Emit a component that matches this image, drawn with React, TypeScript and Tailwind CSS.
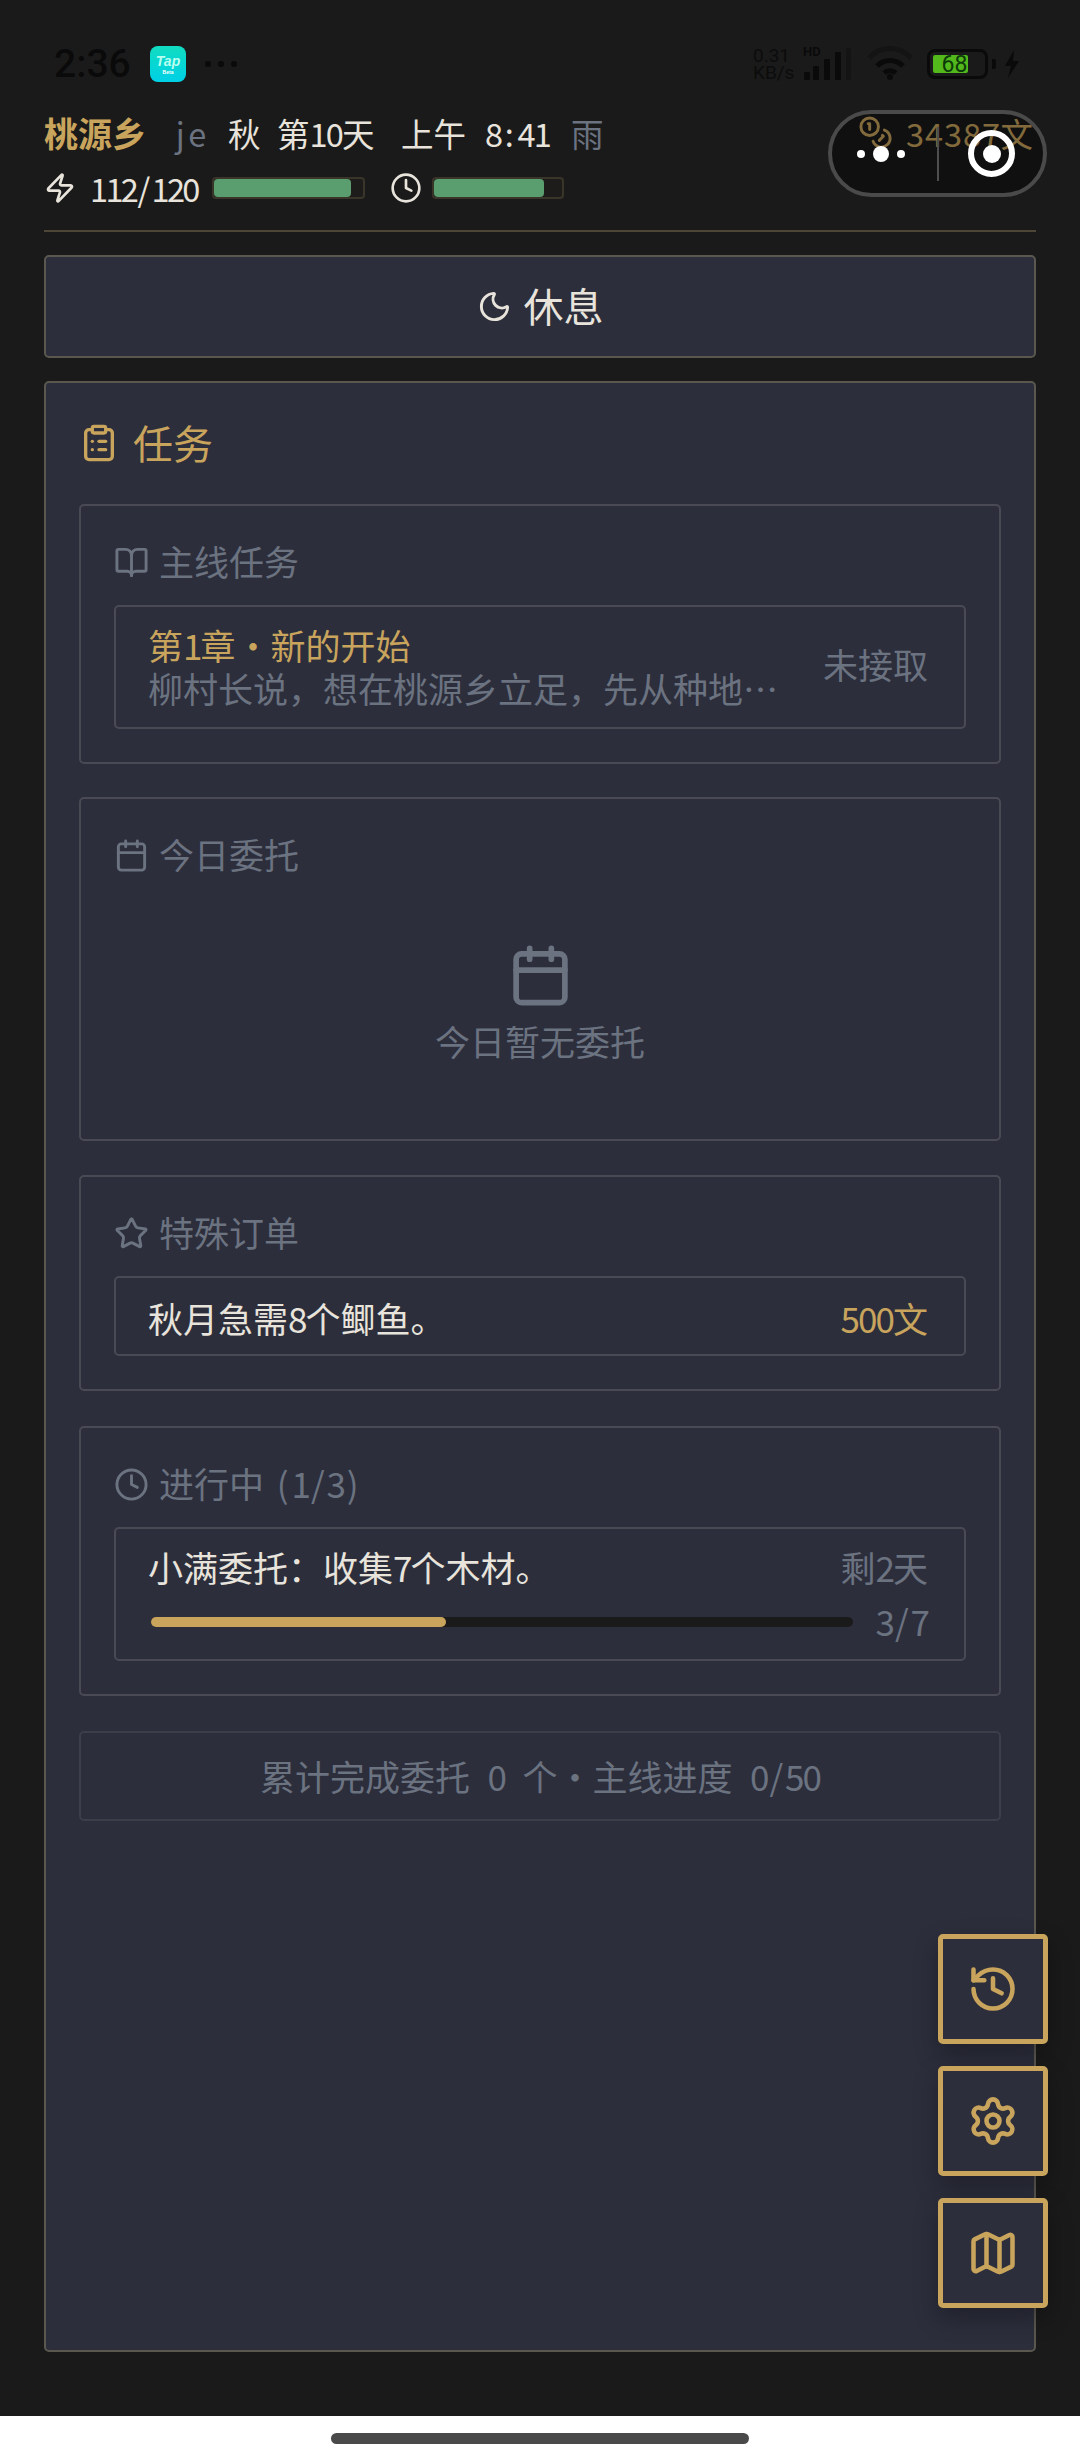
import React from "react";
import { BookOpen, Calendar, ClipboardList, Clock, Coins, History, Map as MapIcon, Moon, Settings, Star, Zap } from "lucide-react";

function N({ children, w = "w-[0.5em]" }: { children: string; w?: string }) {
  return (
    <>
      {[...children].map((c, i) => (
        <span key={i} className={`inline-block text-center ${w}`}>{c === " " ? "\u00A0" : c}</span>
      ))}
    </>
  );
}

function StatusBar() {
  return (
    <div className="flex h-[113px] shrink-0 items-start justify-between pl-[54px] pr-[60px] pt-[46px] text-[#0a0a0a]">
      <div className="flex items-center">
        <span className="w-[96px] font-['Roboto',sans-serif] text-[39px] font-medium leading-[36px]">2:36</span>
        <div className="flex h-[36px] w-[36px] flex-col items-center justify-center rounded-[8px] bg-gradient-to-b from-[#12dcc0] to-[#00d0e6] font-['Liberation_Sans',sans-serif] text-[#b8fff0]">
          <span className="text-[14px] font-bold italic leading-[16px]">Tap</span>
          <span className="text-[5px] font-bold leading-[6px] text-white">Beta</span>
        </div>
        <div className="ml-[19px] flex gap-[7px]">
          <span className="h-[6px] w-[6px] rounded-full bg-[#0a0a0a]" />
          <span className="h-[6px] w-[6px] rounded-full bg-[#0a0a0a]" />
          <span className="h-[6px] w-[6px] rounded-full bg-[#0a0a0a]" />
        </div>
      </div>
      <div className="flex items-center">
        <div className="flex w-[48px] flex-col font-['Roboto',sans-serif] text-[19px] leading-[17px] text-[#0c0c0c]">
          <span>0.31</span>
          <span>KB/s</span>
        </div>
        <svg width="52" height="36" viewBox="0 0 52 36" fill="#0a0a0a">
          <text x="2" y="10" fontSize="13" fontWeight="700" fontFamily="Roboto, sans-serif">HD</text>
          <rect x="3" y="26" width="6" height="8" rx="1" />
          <rect x="12" y="20" width="6" height="14" rx="1" />
          <rect x="23" y="13" width="6" height="21" rx="1" />
          <rect x="34" y="6" width="6" height="28" rx="1" />
          <rect x="45" y="2" width="5" height="32" rx="1" fill="#141414" />
        </svg>
        <svg className="ml-[14px]" width="46" height="36" viewBox="0 0 46 36" fill="none" stroke="#0a0a0a" strokeWidth="5">
          <path d="M2 12 A28 28 0 0 1 44 12" stroke="#141414" />
          <path d="M10 20 A18 18 0 0 1 36 20" />
          <path d="M17 27 A9 9 0 0 1 29 27" />
          <circle cx="23" cy="31" r="3" fill="#0a0a0a" stroke="none" />
        </svg>
        <div className="relative ml-[14px] h-[30px] w-[61px] rounded-[8px] border-[3px] border-[#0a0a0a] p-[3px]">
          <div className="h-full w-[35px] rounded-[2px] bg-[#52b81c]" />
          <span className="absolute inset-0 flex items-center justify-center pr-[6px] font-['Roboto',sans-serif] text-[23px] leading-none text-[#0c3a08]">68</span>
        </div>
        <span className="ml-[4px] h-[10px] w-[4px] rounded-r-[2px] bg-[#0a0a0a]" />
        <svg className="ml-[8px]" width="16" height="28" viewBox="0 0 16 28" fill="#0a0a0a">
          <path d="M10 0 L1 16 L7 16 L4 28 L15 11 L9 11 Z" />
        </svg>
      </div>
    </div>
  );
}

function Bar({ w, fill }: { w: string; fill: string }) {
  return (
    <div className={`h-[22px] rounded-[4px] border-2 border-[#3a3529] bg-[#1d1c1a] ${w}`}>
      <div className={`h-full rounded-[4px] bg-[#5a9e6f] ${fill}`} />
    </div>
  );
}

function Header() {
  return (
    <div className="mx-[44px] shrink-0 border-b-2 border-[#4d4536] pb-[20px]">
      <div className="flex h-[44px] items-center justify-between pb-[5px] text-[32.5px] leading-[39px]">
        <div className="flex items-center text-[#e8e4dc]">
          <span className="w-[128px] text-[34px] font-bold text-[#c8a45c]">桃源乡</span>
          <span className="w-[56px] text-[#6b7280]"><N>je</N></span>
          <span className="w-[49px]">秋</span>
          <span className="w-[124px]">第<N>10</N>天</span>
          <span className="w-[84px]">上午</span>
          <span className="w-[86px]"><N>8:41</N></span>
          <span className="text-[#6b7280]">雨</span>
        </div>
        <div className="flex items-center gap-[12px] pr-[3px] text-[#c8a45c]">
          <Coins size={35} strokeWidth={2} />
          <span><N w="w-[19px]">34387</N>文</span>
        </div>
      </div>
      <div className="mt-[9px] flex h-[44px] items-center text-[32.5px] text-[#e8e4dc]">
        <Zap size={32} strokeWidth={2} />
        <span className="ml-[14px] w-[122px]"><N w="w-[15.4px]">112/120</N></span>
        <Bar w="w-[153px]" fill="w-[92%]" />
        <Clock className="ml-[25px]" size={32} strokeWidth={2} />
        <div className="ml-[10px]"><Bar w="w-[132px]" fill="w-[86%]" /></div>
      </div>
    </div>
  );
}

function SectionTitle({ icon, children }: { icon: React.ReactNode; children: React.ReactNode }) {
  return (
    <div className="mb-[20px] flex h-[46px] items-center gap-[10px] text-[35px] leading-[43px] text-[#6b7280]">
      {icon}
      <span className="mb-[3px]">{children}</span>
    </div>
  );
}

function Tasks() {
  const card = "rounded-[5px] border-2 border-[#4a4a55] px-[33px] pt-[33px]";
  const row = "rounded-[5px] border-2 border-[#4a4a55]";
  return (
    <div className="mx-[44px] mt-[23px] h-[1971px] shrink-0 rounded-[5px] border-2 border-[#5a574f] bg-[#2c2e3c] px-[33px] pt-[35px]">
      <div className="mb-[36px] flex h-[50px] items-center gap-[14px] text-[40px] text-[#c8a45c]">
        <ClipboardList size={40} strokeWidth={2} />
        <span className="mb-[3px]">任务</span>
      </div>

      <div className={`${card} pb-[33px]`}>
        <SectionTitle icon={<BookOpen size={35} strokeWidth={2} />}>主线任务</SectionTitle>
        <div className={`${row} flex h-[124px] items-center gap-[22px] pl-[32px] pr-[36px] text-[35px]`}>
          <div className="min-w-0 flex-1 pb-[3px]">
            <div className="h-[43px] leading-[43px] text-[#c8a45c]">
              第<N>1</N>章<span className="inline-block w-[1em] text-center">·</span>新的开始
            </div>
            <div className="h-[43px] truncate leading-[43px] text-[#6b7280]">{"柳村长说\uFF0C想在桃源乡立足\uFF0C先从种地开始吧。"}</div>
          </div>
          <span className="mb-[6px] shrink-0 text-[#6b7280]">未接取</span>
        </div>
      </div>

      <div className={`${card} mt-[33px] h-[344px]`}>
        <SectionTitle icon={<Calendar size={35} strokeWidth={2} />}>今日委托</SectionTitle>
        <div className="flex flex-col items-center pt-[45px] text-[#6b7280]">
          <Calendar size={65} strokeWidth={2.1} />
          <div className="mt-[8px] h-[50px] text-[35px] leading-[50px]">今日暂无委托</div>
        </div>
      </div>

      <div className={`${card} mt-[34px] pb-[33px]`}>
        <SectionTitle icon={<Star size={35} strokeWidth={2} />}>特殊订单</SectionTitle>
        <div className={`${row} flex h-[80px] items-center justify-between pl-[32px] pr-[36px] pt-[5px] text-[35px]`}>
          <span className="text-[#e8e4dc]">秋月急需<N>8</N>个鲫鱼。</span>
          <span className="text-[#c8a45c]"><N>500</N>文</span>
        </div>
      </div>

      <div className={`${card} mt-[35px] pb-[33px]`}>
        <SectionTitle icon={<Clock size={35} strokeWidth={2} />}>进行中<span className="ml-[10px]"><N>(1/3)</N></span></SectionTitle>
        <div className={`${row} h-[134px] pl-[32px] pr-[36px] pt-[16px] text-[35px]`}>
          <div className="flex h-[44px] items-center justify-between leading-[44px]">
            <span className="text-[#e8e4dc]">{"小满委托\uFF1A收集"}<N>7</N>个木材。</span>
            <span className="text-[#6b7280]">剩<N>2</N>天</span>
          </div>
          <div className="mt-[11px] flex h-[44px] items-center gap-[23px] text-[#6b7280]">
            <div className="ml-[3px] h-[10px] flex-1 rounded-[5px] bg-[#1a1a1a]">
              <div className="h-full w-[42%] rounded-[5px] bg-[#c8a45c]" />
            </div>
            <span className="mb-[2px]"><N>3/7</N></span>
          </div>
        </div>
      </div>

      <div className="mt-[35px] flex h-[90px] items-center justify-center rounded-[5px] border-2 border-[#3c3e4a] text-[35px] text-[#6b7280]">
        <span>累计完成委托<N> 0 </N>个<span className="inline-block w-[1em] text-center">·</span>主线进度<N> 0/50</N></span>
      </div>
    </div>
  );
}

function Fab({ children }: { children: React.ReactNode }) {
  return (
    <button className="flex h-[110px] w-[110px] items-center justify-center rounded-[5px] border-[5px] border-[#c8a45c] bg-[#2c2e3c] text-[#c8a45c] shadow-[0_10px_25px_rgba(0,0,0,0.3)]">
      {children}
    </button>
  );
}

export default function App() {
  return (
    <div className="relative flex h-[2460px] w-[1080px] flex-col overflow-hidden bg-[#1a1a1a] font-['Noto_Sans_CJK_SC',sans-serif]">
      <StatusBar />
      <Header />
      <button className="mx-[44px] mt-[23px] flex h-[103px] shrink-0 items-center justify-center gap-[12px] rounded-[5px] border-2 border-[#5a574f] bg-[#2c2e3c] text-[40px] text-[#e8e4dc]">
        <Moon size={35} strokeWidth={2} />
        <span className="mb-[3px]">休息</span>
      </button>
      <Tasks />
      <div className="mt-auto flex h-[44px] shrink-0 items-center justify-center bg-white">
        <div className="h-[11px] w-[418px] rounded-full bg-[#4a4a4a]" />
      </div>

      <div className="absolute left-[828px] top-[110px] flex h-[87px] w-[219px] items-center rounded-full border-[4px] border-[#4a4a4a] bg-black/35">
        <div className="flex w-[105px] items-center justify-center gap-[8px] pr-[7px]">
          <span className="h-[8px] w-[8px] rounded-full bg-white" />
          <span className="h-[16px] w-[16px] rounded-full bg-white" />
          <span className="h-[8px] w-[8px] rounded-full bg-white" />
        </div>
        <span className="h-[54px] w-[2px] bg-[#4e4e4e]" />
        <div className="flex flex-1 items-center justify-center pl-[1px]">
          <span className="flex h-[47px] w-[47px] items-center justify-center rounded-full border-[6px] border-white">
            <span className="h-[18px] w-[18px] rounded-full bg-white" />
          </span>
        </div>
      </div>

      <div className="absolute left-[938px] top-[1934px] flex flex-col gap-[22px]">
        <Fab><History size={52} strokeWidth={2.1} /></Fab>
        <Fab><Settings size={52} strokeWidth={2.1} /></Fab>
        <Fab><MapIcon size={52} strokeWidth={2.1} /></Fab>
      </div>
    </div>
  );
}
